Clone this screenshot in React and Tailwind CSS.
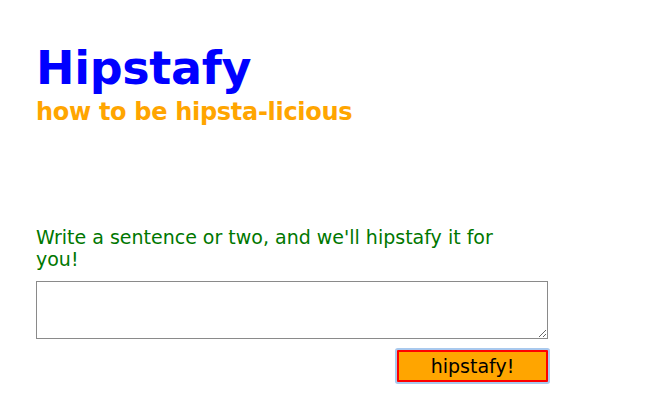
import React from 'react';

export default function App() {
  return (
    <div className="min-h-[417px] bg-white pl-[36px] pt-[38px] font-['DejaVu_Sans',sans-serif]">
      <div className="w-[512px]">
        {/* Header */}
        <h1 className="text-[46px] font-bold leading-[60px] text-[#0000ff] tracking-[-0.3px]">Hipstafy</h1>
        <h2 className="text-[24px] font-bold leading-[28px] text-[#ffa500] tracking-[-0.3px]">how to be hipsta-licious</h2>

        {/* Form */}
        <p className="mt-[100px] max-w-[480px] text-[19px] leading-[22px] text-[#007700]">
          Write a sentence or two, and we'll hipstafy it for you!
        </p>
        <textarea className="mt-[11px] block h-[58px] w-[512px] resize-y border border-[#8a8a8a] bg-white" />
        <div className="mt-[11px] flex justify-end">
          <button className="block h-[32px] w-[151px] rounded-[1px] border-2 border-[#ff0000] bg-[#ffa500] text-[19px] leading-[26px] text-black ring-2 ring-[#a9c9ee]">
            hipstafy!
          </button>
        </div>
      </div>
    </div>
  );
}
